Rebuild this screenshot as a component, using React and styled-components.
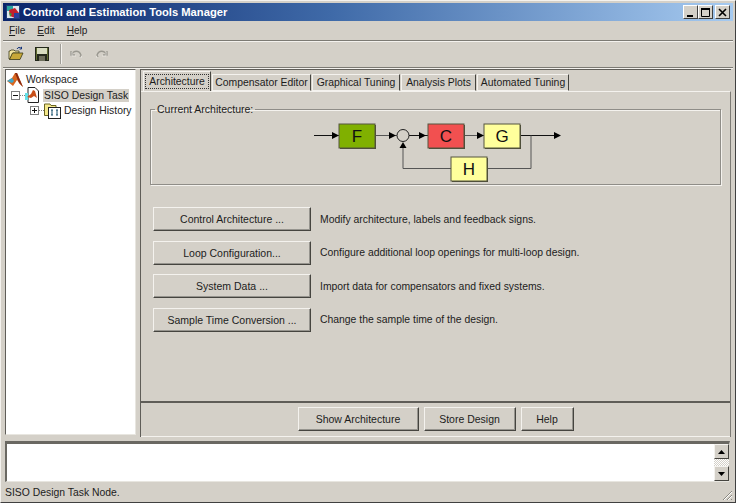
import React from 'react';
import styled, { createGlobalStyle } from 'styled-components';

const GlobalStyle = createGlobalStyle`
    html, body {
        margin: 0;
        padding: 0;
        background: #d4d0c8;
    }
    * {
        box-sizing: border-box;
    }
`;

const Window = styled.div`
    width: 736px;
    height: 503px;
    display: flex;
    flex-direction: column;
    background: #d4d0c8;
    color: #1c1c1c;
    font-family: "Liberation Sans", Arial, sans-serif;
    font-size: 10.4px;
    border-right: 1px solid #404040;
    border-bottom: 1px solid #404040;
    border-top: 1px solid #f4f2ee;
    border-left: 1px solid #f4f2ee;
    padding: 2px 2px 0 2px;
    overflow: hidden;
`;

const TitleBar = styled.div`
    height: 18px;
    flex: none;
    display: flex;
    align-items: center;
    padding: 0 3px 0 3px;
    background: linear-gradient(to right, #0a246a 0%, #3f6aa8 45%, #a6caf0 100%);
`;

const TitleText = styled.span`
    margin-left: 3px;
    flex: 1;
    color: #fff;
    font-size: 11.2px;
    font-weight: bold;
`;

const WinButton = styled.div`
    width: 15px;
    height: 14px;
    margin-left: ${p => (p.$gap ? '2px' : '0')};
    background: #d4d0c8;
    border: 1px solid;
    border-color: #fff #404040 #404040 #fff;
    display: flex;
    align-items: center;
    justify-content: center;
`;

const MenuBar = styled.div`
    height: 19px;
    flex: none;
    margin-top: 1px;
    display: flex;
    align-items: center;
    padding: 0 0 2px 6px;
    gap: 12px;
    border-bottom: 1px solid #7c7a74;
`;

const MenuItem = styled.span`
    font-size: 10.1px;
    u {
        text-decoration: underline;
    }
`;

const Toolbar = styled.div`
    height: 27px;
    flex: none;
    display: flex;
    align-items: center;
    padding: 0 0 2px 5px;
    border-top: 1px solid #f4f2ee;
    border-bottom: 1px solid #7c7a74;
`;

const ToolIcon = styled.div`
    width: 16px;
    height: 16px;
    margin-right: ${p => p.$gap || 9}px;
    display: flex;
`;

const ToolSep = styled.div`
    width: 2px;
    height: 20px;
    margin: 0 6px 0 2px;
    border-left: 1px solid #a09e98;
    border-right: 1px solid #f4f2ee;
`;

const Main = styled.div`
    flex: 1;
    display: flex;
    min-height: 0;
    border-top: 1px solid #f4f2ee;
    padding: 0 2px 0 2px;
`;

const TreePanel = styled.div`
    width: 131px;
    flex: none;
    margin-bottom: 2px;
    background: #fff;
    border: 1px solid;
    border-color: #5f5d58 #e8e6e0 #e8e6e0 #5f5d58;
    padding: 2px 0 0 1px;
`;

const TreeRow = styled.div`
    height: 15.5px;
    display: flex;
    align-items: center;
    padding-left: ${p => p.$indent}px;
    white-space: nowrap;
`;

const Expander = styled.span`
    width: 9px;
    height: 9px;
    flex: none;
    border: 1px solid #7f7f7f;
    background: #fff;
    display: flex;
    align-items: center;
    justify-content: center;
    font-size: 0;
    position: relative;
    &::before {
        content: '';
        width: 5px;
        height: 1px;
        background: #111;
    }
    &::after {
        content: '';
        display: ${p => (p.$plus ? 'block' : 'none')};
        position: absolute;
        left: 3px;
        top: 1px;
        width: 1px;
        height: 5px;
        background: #111;
    }
`;

const Dots = styled.span`
    width: 5px;
    flex: none;
    border-top: 1px dotted #808080;
`;

const TreeLabel = styled.span`
    margin-left: ${p => p.$gap || 2}px;
    padding: 1px 1px;
    background: ${p => (p.$selected ? '#d4d0c8' : 'transparent')};
    font-size: 10.4px;
`;

const RightPanel = styled.div`
    flex: 1;
    margin-left: 4px;
    min-width: 0;
    display: flex;
    flex-direction: column;
    border-left: 1px solid #5f5d58;
    border-top: 1px solid #5f5d58;
`;

const TabStrip = styled.div`
    height: 21px;
    flex: none;
    display: flex;
    align-items: flex-end;
    padding-left: 2px;
    gap: 1px;
`;

const Tab = styled.div`
    height: ${p => (p.$active ? 20 : 17)}px;
    width: ${p => p.$w}px;
    flex: none;
    display: flex;
    align-items: center;
    justify-content: center;
    background: #d4d0c8;
    border: 1px solid;
    border-color: #f4f2ee #45443f ${p => (p.$active ? '#d4d0c8' : '#f4f2ee')} #f4f2ee;
    border-bottom-width: ${p => (p.$active ? 0 : 1)}px;
    white-space: nowrap;
    span {
        padding: 1px 3px;
        outline: ${p => (p.$active ? '1px dotted #333' : 'none')};
    }
`;

const TabBody = styled.div`
    flex: 1;
    min-height: 0;
    display: flex;
    flex-direction: column;
    border-top: 1px solid #f4f2ee;
    border-right: 1px solid #7c7a74;
    padding: 12px 7px 0 9px;
`;

const GroupBox = styled.fieldset`
    margin: 0;
    padding: 0;
    height: 81px;
    width: 571px;
    flex: none;
    border: 1px solid;
    border-color: #8f8d88;
    box-shadow: inset 1px 1px 0 #f4f2ee, 1px 1px 0 #f4f2ee;
    min-inline-size: 0;
    display: flex;
    justify-content: flex-start;
    legend {
        margin-left: 4px;
        padding: 0 2px;
        line-height: 11px;
        font-size: 10.5px;
    }
`;

const Diagram = styled.svg`
    display: block;
    margin: 6px 0 0 160px;
    flex: none;
`;

const ActionList = styled.div`
    margin: 22px 0 0 3px;
    display: flex;
    flex-direction: column;
    gap: 9.67px;
`;

const ActionRow = styled.div`
    display: flex;
    align-items: center;
    gap: 9px;
`;

const Button = styled.div`
    width: ${p => p.$w}px;
    height: ${p => p.$h || 24}px;
    flex: none;
    display: flex;
    align-items: center;
    justify-content: center;
    background: #d4d0c8;
    border: 1px solid;
    border-color: #f4f2ee #45443f #45443f #f4f2ee;
    box-shadow: inset -1px -1px 0 #96948e;
    white-space: nowrap;
    font-size: 10.5px;
`;

const Description = styled.span`
    white-space: nowrap;
`;

const Spacer = styled.div`
    flex: 1;
`;

const BottomBar = styled.div`
    height: 36px;
    flex: none;
    margin: 0 -7px 0 -9px;
    display: flex;
    align-items: center;
    justify-content: center;
    padding: 0 0 2px 0;
    gap: 5px;
    border-top: 2px solid #5f5d58;
    border-bottom: 1px solid #f4f2ee;
`;

const MessageArea = styled.div`
    height: 41px;
    flex: none;
    margin: 4px 3px 0 2px;
    display: flex;
    background: #fff;
    border: 1px solid;
    border-top: 3px solid #6a6862;
    border-left: 2px solid #6a6862;
    border-color: #6a6862 #d4d0c8 #e8e6e0 #6a6862;
`;

const MessageText = styled.div`
    flex: 1;
`;

const ScrollBar = styled.div`
    width: 15px;
    flex: none;
    display: flex;
    flex-direction: column;
    justify-content: space-between;
    background: repeating-conic-gradient(#d4d0c8 0% 25%, #fff 0% 50%) 0 0 / 2px 2px;
`;

const ScrollButton = styled.div`
    height: 15px;
    background: #d4d0c8;
    border: 1px solid;
    border-color: #f4f2ee #45443f #45443f #f4f2ee;
    display: flex;
    align-items: center;
    justify-content: center;
`;

const StatusBar = styled.div`
    height: 20px;
    flex: none;
    display: flex;
    align-items: center;
    justify-content: space-between;
    padding-left: 2px;
`;

const Grip = styled.svg`
    display: block;
    margin-top: 6px;
`;

const Membrane = ({ size = 16 }) => (
    <svg width={size} height={size} viewBox="0 0 16 16">
        <path d="M0 9 L5 6 L8 1 L10 1 L16 15 L13 12 L10 8 L6 14 Z" fill="#d9661f" />
        <path d="M0 9 L5 6 L7 9 L5 11 Z" fill="#3fa7c9" />
        <path d="M8 1 L10 1 L16 15 L12 11 Z" fill="#8c2a10" />
    </svg>
);

const TitleLogo = () => (
    <svg width="14" height="14" viewBox="0 0 14 14">
        <rect width="14" height="14" fill="#1f3c78" />
        <rect x="1" y="1" width="12" height="12" fill="#dfe6ee" />
        <path d="M1 1 H7 V6 H1 Z" fill="#2aa6a0" />
        <path d="M3 5 L9 3 L13 8 L9 13 L4 11 Z" fill="#c4202c" />
        <path d="M8 8 L13 8 L13 13 L8 13 Z" fill="#2c3f9c" />
        <path d="M3 7 L6 9 L4 12 Z" fill="#3d9a3a" />
    </svg>
);

const MinIcon = () => (
    <svg width="9" height="9" viewBox="0 0 9 9"><rect x="1" y="7" width="6" height="2" fill="#000" /></svg>
);

const MaxIcon = () => (
    <svg width="9" height="9" viewBox="0 0 9 9">
        <path d="M0.5 1.5 H8.5 V8.5 H0.5 Z" fill="none" stroke="#000" />
        <rect y="0" width="9" height="2" fill="#000" />
    </svg>
);

const CloseIcon = () => (
    <svg width="9" height="9" viewBox="0 0 9 9">
        <path d="M1 1 L8 8 M8 1 L1 8" stroke="#000" strokeWidth="1.6" />
    </svg>
);

const OpenIcon = () => (
    <svg width="16" height="16" viewBox="0 0 16 16">
        <path d="M1 5 H2 L3 4 H6 L7 5 H11 V7 H5 L2 13 H1 Z" fill="#f5e6a0" stroke="#3a3a18" strokeWidth="0.8" />
        <path d="M4.5 7 H15 L12 13.5 H1.5 Z" fill="#c8a838" stroke="#3a3a18" strokeWidth="0.8" />
        <path d="M9 3 C10 1 12 1 13.5 2.5 M13.5 0.8 V3 H11.5" fill="none" stroke="#12327a" strokeWidth="1" />
    </svg>
);

const SaveIcon = () => (
    <svg width="16" height="16" viewBox="0 0 16 16">
        <rect x="1" y="1" width="14" height="14" fill="#24281c" />
        <rect x="3" y="2" width="10" height="6" fill="#d8dcc0" />
        <rect x="2" y="2" width="1" height="12" fill="#5f6a30" />
        <rect x="13" y="2" width="1" height="12" fill="#5f6a30" />
        <rect x="5" y="10" width="6" height="5" fill="#6e6e5c" />
    </svg>
);

const UndoIcon = ({ flip }) => (
    <svg width="16" height="16" viewBox="0 0 16 16" style={flip ? { transform: 'scaleX(-1)' } : undefined}>
        <path d="M3 5 V9 H7 M3 9 C6 4 11 4 13 9 L12 11" fill="none" stroke="#9a9890" strokeWidth="1.3" />
        <path d="M4 6 V10 H8 M13.5 10 L13 12" fill="none" stroke="#f4f2ee" strokeWidth="0.6" />
    </svg>
);

const DocIcon = () => (
    <svg width="16" height="16" viewBox="0 0 16 16">
        <path d="M3 0.5 H10 L13.5 4 V15.5 H3 Z" fill="#fff" stroke="#222" />
        <path d="M0 6 H3 V13 H0 Z" fill="#63e0e8" />
        <path d="M2 10 L6 7 L8 3 L10 4 L12 11 L9 9 L6 11 Z" fill="#c9501a" />
    </svg>
);

const HistoryIcon = () => (
    <svg width="17" height="16" viewBox="0 0 17 16">
        <path d="M0.5 1 H6 L7 2.5 H12 V12.5 H0.5 Z" fill="#f4e88a" stroke="#6a6420" />
        <rect x="4.5" y="4.5" width="12" height="11" fill="#fff" stroke="#222" />
        <path d="M7 7 H9 M12 7 H14 M7 12 H9 M12 12 H14 M8 7 V12 M13 7 V12" stroke="#16506c" fill="none" />
    </svg>
);

const Block = ({ x, y, fill, label }) => (
    <g>
        <rect x={x + 1} y={y + 1} width="36" height="24" fill="#4a4a36" />
        <rect x={x} y={y} width="36" height="24" fill={fill} stroke="#55553f" />
        <text x={x + 18} y={y + 17.5} textAnchor="middle" fontFamily="Liberation Sans, Arial, sans-serif" fontSize="17" fill="#111">{label}</text>
    </g>
);

const Arrow = ({ x, y }) => <path d={`M${x} ${y - 3.5} L${x + 7} ${y} L${x} ${y + 3.5} Z`} fill="#000" />;

// block diagram, origin is at x=310 y=120 of the window
const ArchitectureDiagram = () => (
    <Diagram width="256" height="62" viewBox="0 0 256 62">
        <path d="M3 14.5 H28" stroke="#111" />
        <path d="M65 14.5 H86" stroke="#555" />
        <path d="M98 14.5 H117" stroke="#111" />
        <path d="M153 14.5 H173" stroke="#555" />
        <path d="M210 14.5 H245" stroke="#111" />
        <path d="M220 14.5 V47.5 H176" stroke="#555" fill="none" />
        <path d="M140 47.5 H92 V25" stroke="#555" fill="none" />
        <Arrow x={21} y={14.5} />
        <Arrow x={78} y={14.5} />
        <Arrow x={108} y={14.5} />
        <Arrow x={166} y={14.5} />
        <Arrow x={243} y={14.5} />
        <circle cx="92" cy="14.5" r="6" fill="#d4d0c8" stroke="#222" />
        <path d="M88.5 27 L92 21 L95.5 27 Z" fill="#000" />
        <Block x={28} y={3} fill="#80b000" label="F" />
        <Block x={117} y={3} fill="#f25050" label="C" />
        <Block x={173} y={3} fill="#ffff9c" label="G" />
        <Block x={140} y={36} fill="#ffff9c" label="H" />
    </Diagram>
);

const tabs = [
    ['Architecture', 68],
    ['Compensator Editor', 99],
    ['Graphical Tuning', 88],
    ['Analysis Plots', 75],
    ['Automated Tuning', 92],
];

const actions = [
    ['Control Architecture ...', 'Modify architecture, labels and feedback signs.'],
    ['Loop Configuration...', 'Configure additional loop openings for multi-loop design.'],
    ['System Data ...', 'Import data for compensators and fixed systems.'],
    ['Sample Time Conversion ...', 'Change the sample time of the design.'],
];

const App = () => {
    return (
        <Window>
            <GlobalStyle />
            <TitleBar>
                <TitleLogo />
                <TitleText>Control and Estimation Tools Manager</TitleText>
                <WinButton><MinIcon /></WinButton>
                <WinButton><MaxIcon /></WinButton>
                <WinButton $gap><CloseIcon /></WinButton>
            </TitleBar>
            <MenuBar>
                <MenuItem><u>F</u>ile</MenuItem>
                <MenuItem><u>E</u>dit</MenuItem>
                <MenuItem><u>H</u>elp</MenuItem>
            </MenuBar>
            <Toolbar>
                <ToolIcon $gap={10}><OpenIcon /></ToolIcon>
                <ToolIcon $gap={8}><SaveIcon /></ToolIcon>
                <ToolSep />
                <ToolIcon $gap={10}><UndoIcon /></ToolIcon>
                <ToolIcon><UndoIcon flip /></ToolIcon>
            </Toolbar>
            <Main>
                <TreePanel>
                    <TreeRow $indent={0}>
                        <Membrane />
                        <TreeLabel $gap={2}>Workspace</TreeLabel>
                    </TreeRow>
                    <TreeRow $indent={4}>
                        <Expander />
                        <Dots />
                        <DocIcon />
                        <TreeLabel $selected>SISO Design Task</TreeLabel>
                    </TreeRow>
                    <TreeRow $indent={23}>
                        <Expander $plus />
                        <Dots />
                        <HistoryIcon />
                        <TreeLabel>Design History</TreeLabel>
                    </TreeRow>
                </TreePanel>
                <RightPanel>
                    <TabStrip>
                        {tabs.map(([label, w], i) => (
                            <Tab key={label} $w={w} $active={i === 0}><span>{label}</span></Tab>
                        ))}
                    </TabStrip>
                    <TabBody>
                        <GroupBox>
                            <legend>Current Architecture:</legend>
                            <ArchitectureDiagram />
                        </GroupBox>
                        <ActionList>
                            {actions.map(([label, text]) => (
                                <ActionRow key={label}>
                                    <Button $w={158}>{label}</Button>
                                    <Description>{text}</Description>
                                </ActionRow>
                            ))}
                        </ActionList>
                        <Spacer />
                        <BottomBar>
                            <Button $w={121}>Show Architecture</Button>
                            <Button $w={92}>Store Design</Button>
                            <Button $w={53}>Help</Button>
                        </BottomBar>
                    </TabBody>
                </RightPanel>
            </Main>
            <MessageArea>
                <MessageText />
                <ScrollBar>
                    <ScrollButton>
                        <svg width="7" height="4" viewBox="0 0 7 4"><path d="M3.5 0 L7 4 H0 Z" fill="#000" /></svg>
                    </ScrollButton>
                    <ScrollButton>
                        <svg width="7" height="4" viewBox="0 0 7 4"><path d="M0 0 H7 L3.5 4 Z" fill="#000" /></svg>
                    </ScrollButton>
                </ScrollBar>
            </MessageArea>
            <StatusBar>
                <span>SISO Design Task Node.</span>
                <Grip width="12" height="12" viewBox="0 0 12 12">
                    <path d="M11 2 L2 11 M11 6 L6 11 M11 10 L10 11" stroke="#8a8880" fill="none" />
                    <path d="M11 3 L3 11 M11 7 L7 11" stroke="#fff" fill="none" />
                </Grip>
            </StatusBar>
        </Window>
    );
};

export default App;
